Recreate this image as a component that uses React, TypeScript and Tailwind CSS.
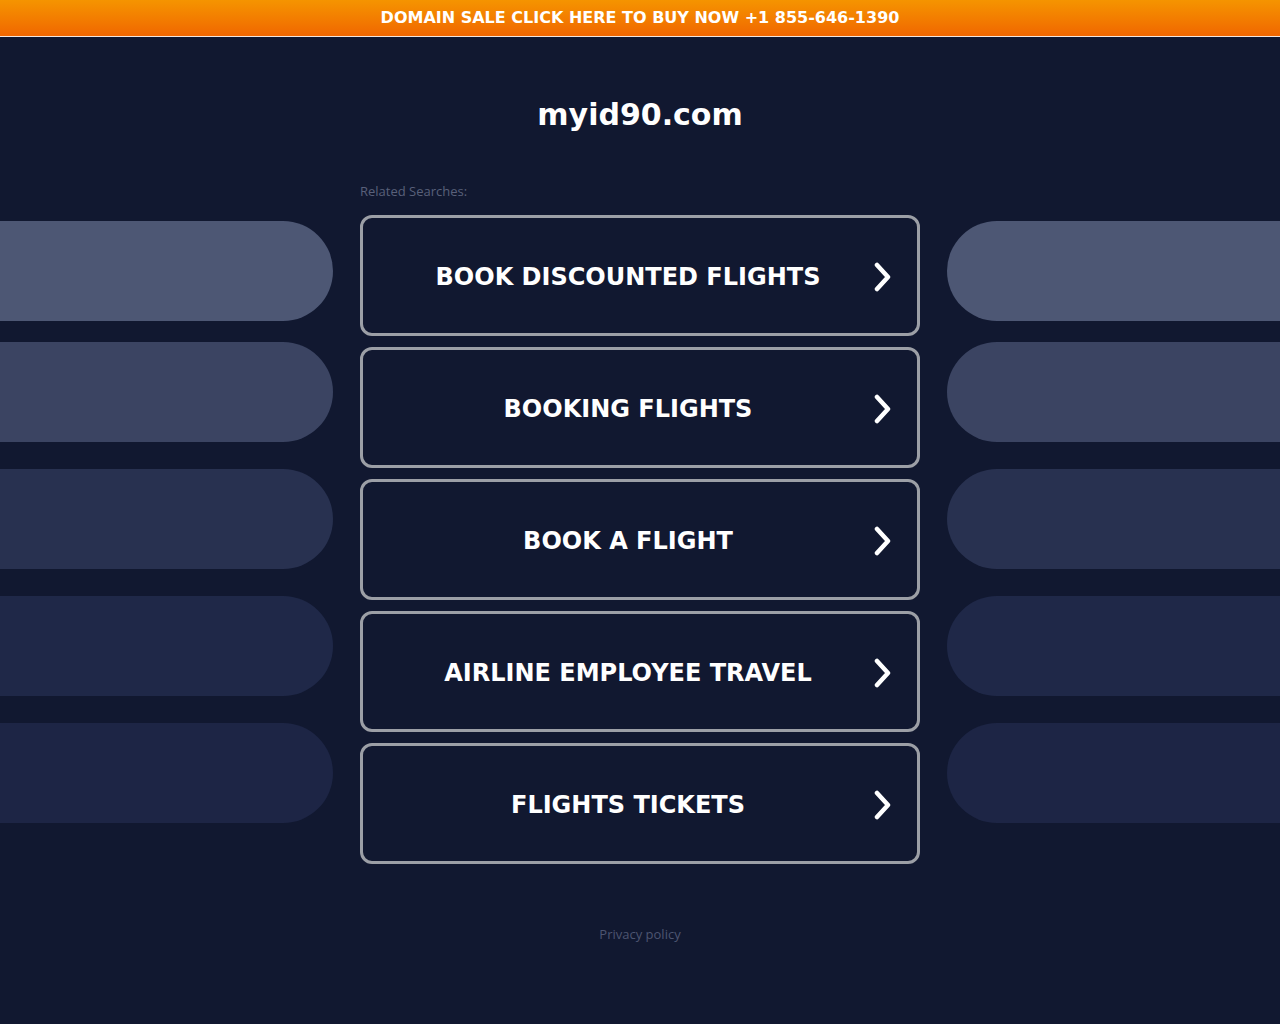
import React from 'react';

const searches = [
  'BOOK DISCOUNTED FLIGHTS',
  'BOOKING FLIGHTS',
  'BOOK A FLIGHT',
  'AIRLINE EMPLOYEE TRAVEL',
  'FLIGHTS TICKETS',
];

// side pill colours, top to bottom
const pills = [
  { color: 'bg-[#4d5774]', gap: 'mt-0' },
  { color: 'bg-[#3b4462]', gap: 'mt-[21px]' },
  { color: 'bg-[#283150]', gap: 'mt-[27px]' },
  { color: 'bg-[#1f2848]', gap: 'mt-[27px]' },
  { color: 'bg-[#1d2545]', gap: 'mt-[27px]' },
];

const Chevron = () => (
  <svg width="20" height="30" viewBox="0 0 20 30" fill="none">
    <path d="M4 3 L15 15 L4 27" stroke="#ffffff" strokeWidth="4.5" strokeLinecap="round" strokeLinejoin="round" />
  </svg>
);

const SidePills: React.FC<{ side: 'left' | 'right' }> = ({ side }) => (
  <div className="flex-1 flex flex-col pt-[38px]">
    {pills.map((p, i) => (
      <div
        key={i}
        className={`${p.color} ${p.gap} h-[100px] ${side === 'left' ? 'rounded-r-[50px]' : 'rounded-l-[50px]'}`}
      />
    ))}
  </div>
);

const App: React.FC = () => {
  return (
    <div className="min-h-[1024px] bg-[#111830] font-['DejaVu_Sans',sans-serif]">
      <div className="h-[37px] bg-gradient-to-b from-[#f59400] to-[#f06600] border-b border-[#f4e6dc] flex items-center justify-center">
        <span className="text-white font-bold text-[16px]">DOMAIN SALE CLICK HERE TO BUY NOW +1 855-646-1390</span>
      </div>

      <h1 className="text-center text-white font-bold text-[30px] mt-[58px] leading-[40px]">myid90.com</h1>

      <div className="flex gap-[27px] mt-[48px]">
        <SidePills side="left" />

        <div className="w-[560px] flex flex-col">
          <p className="text-[13px] leading-[16px] text-[#59607a] font-['Open_Sans',sans-serif] mb-[16px]">Related Searches:</p>
          <div className="flex flex-col gap-[11px]">
            {searches.map((s) => (
              <div
                key={s}
                className="h-[121px] rounded-[12px] border-[3px] border-[#9c9fa6] flex items-center relative"
              >
                <span className="flex-1 text-center pr-[24px] pt-[3px] text-white font-bold text-[24px]">{s}</span>
                <div className="absolute right-[24px] top-1/2 -translate-y-1/2 mt-[1px]">
                  <Chevron />
                </div>
              </div>
            ))}
          </div>
        </div>

        <SidePills side="right" />
      </div>

      <p className="text-center text-[13px] text-[#4d5571] font-['Open_Sans',sans-serif] mt-[61px]">Privacy policy</p>
    </div>
  );
};

export default App;
